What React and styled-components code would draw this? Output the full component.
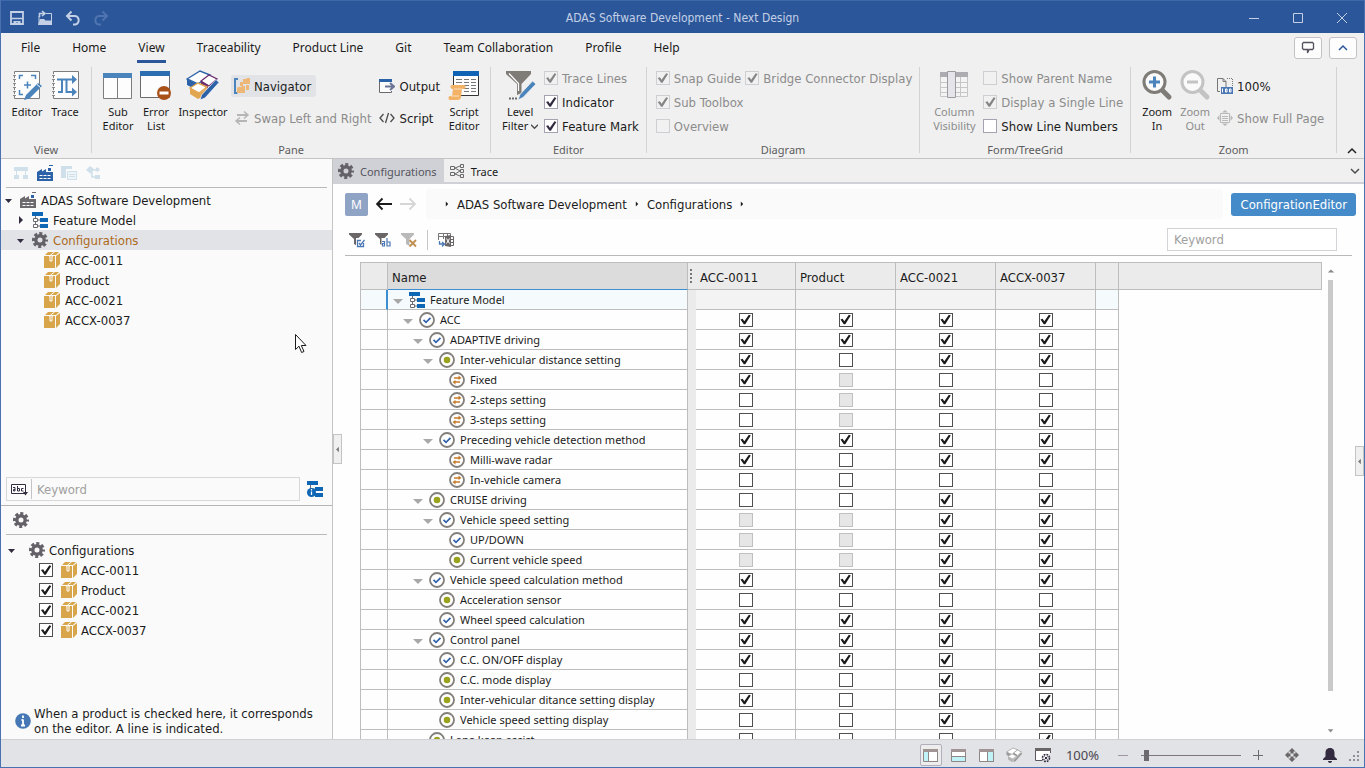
import React, { useState } from 'react';
import styled, { createGlobalStyle } from 'styled-components';

const UI_FONT = '"DejaVu Sans Condensed", "DejaVu Sans", sans-serif';
const LABEL_FONT = '"Noto Sans", "Open Sans", sans-serif';

const GlobalStyle = createGlobalStyle`
  * {
    box-sizing: border-box;
  }

  body {
    margin: 0;
    overflow: hidden;
    font-family: ${UI_FONT};
    font-size: 13px;
    color: #1b1b1b;
  }

  button, input {
    font: inherit;
    color: inherit;
    margin: 0;
    padding: 0;
  }

  button {
    background: none;
    border: none;
    cursor: pointer;
  }

  svg {
    display: block;
    flex: none;
  }
`;

const Window = styled.div`
  display: flex;
  flex-direction: column;
  height: 100vh;
  border: 1px solid #4a72b0;
  border-top: none;
  background: #fff;
`;

/* ---------- title bar ---------- */

const TitleBar = styled.header`
  display: grid;
  grid-template-columns: 1fr auto 1fr;
  align-items: center;
  height: 33px;
  flex: none;
  padding-top: 1px;
  background: #2b579a;
  color: #c3d0e6;
  border-top: 1px solid #3f68a8;
`;

const QuickAccess = styled.div`
  display: flex;
  gap: 12px;
  padding-left: 8px;
`;

const AppTitle = styled.h1`
  margin: 0;
  padding-top: 1px;
  font-size: 12px;
  font-weight: normal;
`;

const WindowButtons = styled.div`
  display: flex;
  justify-content: flex-end;
`;

const WindowButton = styled.button`
  display: grid;
  place-items: center;
  width: 44px;
  height: 31px;
`;

/* ---------- menu ---------- */

const MenuBar = styled.nav`
  display: flex;
  align-items: flex-start;
  height: 33px;
  flex: none;
  padding: 0 7px 0 4px;
  background: #f0f0f0;
`;

const MenuTab = styled.button`
  height: 30px;
  padding: 0 15px;
  font-family: ${LABEL_FONT};
  font-size: 12px;

  span {
    display: block;
    height: 30px;
    line-height: 30px;
    padding: 0 1px;
    border-bottom: 3px solid ${(props) => (props.$active ? '#2b579a' : 'transparent')};
  }
`;

const MenuTools = styled.div`
  display: flex;
  gap: 7px;
  margin: 4px 0 0 auto;
`;

const MenuTool = styled.button`
  display: grid;
  place-items: center;
  width: 28px;
  height: 22px;
  border: 1px solid #c3c3c6;
  border-radius: 3px;
  background: #fdfdfd;
`;

/* ---------- ribbon ---------- */

const Ribbon = styled.div`
  display: flex;
  height: 93px;
  flex: none;
  background: #f0f0f0;
  border-bottom: 1px solid #c4c4c4;
`;

const Group = styled.section`
  display: flex;
  flex-direction: column;
  padding: 0 8px 0 7px;
  position: relative;

  &::after {
    content: '';
    position: absolute;
    right: 0;
    top: 1px;
    bottom: 5px;
    width: 1px;
    background: #d3d3d6;
  }
`;

const GroupItems = styled.div`
  display: flex;
  height: 76px;
`;

const GroupLabel = styled.div`
  text-align: center;
  font-family: ${LABEL_FONT};
  font-size: 11px;
  line-height: 16px;
  color: #5c5c5c;
`;

const BigButton = styled.button`
  display: flex;
  flex-direction: column;
  align-items: center;
  gap: 4px;
  width: ${(props) => props.$width || 38}px;
  padding-top: 3px;
  font-family: ${LABEL_FONT};
  font-size: 11px;
  line-height: 14px;
  white-space: nowrap;
  color: ${(props) => (props.disabled ? '#8c8c8c' : '#1b1b1b')};
`;

const ButtonStack = styled.div`
  display: flex;
  flex-direction: column;
  align-items: flex-start;
  gap: 10px;
  padding-top: 9px;
`;

const SmallButton = styled.button`
  display: flex;
  align-items: center;
  gap: 4px;
  height: 22px;
  padding: 0 5px 0 3px;
  border-radius: 3px;
  white-space: nowrap;
  background: ${(props) => (props.$pressed ? '#e1e3e6' : 'transparent')};
  color: ${(props) => (props.disabled ? '#8c8c8c' : '#1b1b1b')};
`;

const CheckStack = styled.div`
  display: flex;
  flex-direction: column;
`;

const CheckLabel = styled.label`
  display: flex;
  align-items: center;
  gap: 4px;
  height: 24px;
  padding-left: 2px;
  white-space: nowrap;
  color: ${(props) => (props.$disabled ? '#8c8c8c' : '#1b1b1b')};
`;

const CheckBox = styled.input.attrs({ type: 'checkbox' })`
  appearance: none;
  display: block;
  flex: none;
  width: 14px;
  height: 14px;
  border: 1px solid ${(props) => (props.$soft ? '#a5a3b2' : '#4f4f4f')};
  background: #fff;

  &:checked::before {
    content: '';
    display: block;
    width: 12px;
    height: 12px;
    background: ${(props) => (props.$soft ? '#332b40' : '#1b1b1b')};
    clip-path: polygon(8% 50%, 26% 44%, 40% 64%, 78% 10%, 94% 16%, 48% 90%, 36% 90%);
  }

  &:disabled {
    border-color: ${(props) => (props.$soft ? '#cfcfd3' : '#c0c0c0')};
    background: ${(props) => (props.$soft ? '#f1f1f1' : '#e6e6e6')};
  }

  &:disabled::before {
    background: #858585;
  }
`;

const RibbonEnd = styled.div`
  display: flex;
  align-items: flex-end;
  margin-left: auto;
  padding: 0 7px 2px 0;
`;

/* ---------- side panel ---------- */

const Workspace = styled.main`
  display: grid;
  grid-template-columns: 332px 1fr;
  flex: 1;
  min-height: 0;
`;

const SidePanel = styled.aside`
  display: flex;
  flex-direction: column;
  min-height: 0;
  background: #fafafa;
  border-right: 1px solid #c4c4c4;
`;

const NavigatorPane = styled.section`
  display: flex;
  flex-direction: column;
  flex: 1;
  min-height: 0;
`;

const ProductPane = styled.section`
  display: flex;
  flex-direction: column;
  flex: 0 0 234px;
  border-top: 1px solid #b4b4b8;
`;

const PaneToolbar = styled.div`
  display: flex;
  align-items: center;
  gap: 8px;
  height: 29px;
  margin: 0 5px;
  padding: 0 7px;
  border-bottom: 1px solid #b9b9b9;
`;

const IconButton = styled.button`
  display: grid;
  place-items: center;
`;

const Tree = styled.ul`
  list-style: none;
  margin: 0;
  padding: ${(props) => props.$top}px 0 0;
  flex: 1;
`;

const TreeRow = styled.li`
  display: flex;
  align-items: center;
  gap: 5px;
  height: 20px;
  padding-left: ${(props) => 2 + props.$level * 12}px;
  background: ${(props) => (props.$selected ? '#e1e3e6' : 'transparent')};
  color: ${(props) => (props.$selected ? '#ad6a1c' : '#1b1b1b')};
`;

const CaretButton = styled.button`
  display: grid;
  place-items: center;
  width: 12px;
  height: 16px;
`;

const CheckTreeRow = styled.li`
  display: flex;
  align-items: center;
  gap: 4px;
  height: 20px;
  padding-left: ${(props) => (props.$root ? 5 : 38)}px;

  ${CaretButton} {
    margin-right: 7px;
  }

  label {
    display: flex;
    align-items: center;
    gap: 4px;
  }

  input {
    margin-right: 4px;
  }
`;

const SearchRow = styled.div`
  display: flex;
  align-items: center;
  justify-content: space-between;
  padding: 0 9px 4px 5px;
`;

const SearchBox = styled.div`
  display: flex;
  align-items: center;
  width: 294px;
  height: 24px;
  border: 1px solid #d8d8dc;

  button {
    padding: 0 3px 0 4px;
    height: 20px;
    border-right: 1px solid #c4c4c8;
  }

  input {
    flex: 1;
    min-width: 0;
    padding: 0 5px;
    border: none;
    outline: none;
    background: none;
  }

  input::placeholder {
    color: #a0a0a0;
  }
`;

const Hint = styled.p`
  display: flex;
  align-items: center;
  gap: 3px;
  margin: 0;
  padding: 0 14px 3px;
  line-height: 15px;
`;

/* ---------- editor ---------- */

const Editor = styled.section`
  display: flex;
  flex-direction: column;
  min-width: 0;
  min-height: 0;
  position: relative;
  background: #fefefe;
`;

const TabStrip = styled.div`
  display: flex;
  align-items: center;
  height: 25px;
  flex: none;
  padding-right: 4px;
  background: #f0f0f0;
  border-bottom: 2px solid #d0d1d7;
`;

const EditorTab = styled.button`
  display: flex;
  align-items: center;
  gap: 6px;
  height: 23px;
  padding: 1px 7px 0 5px;
  font-family: ${LABEL_FONT};
  font-size: 11px;
  background: ${(props) => (props.$active ? '#d0d1d7' : 'transparent')};
  color: ${(props) => (props.$active ? '#55555c' : '#1b1b1b')};
`;

const PathRow = styled.div`
  display: flex;
  align-items: center;
  gap: 8px;
  padding: 5px 8px 0 12px;
`;

const ModelButton = styled.button`
  width: 23px;
  height: 23px;
  border-radius: 2px;
  background: #8fa3c4;
  color: #fff;
  font-family: ${LABEL_FONT};
  font-size: 12px;
`;

const Breadcrumb = styled.nav`
  display: flex;
  align-items: center;
  gap: 7px;
  flex: 1;
  height: 30px;
  margin-left: 2px;
  padding-left: 18px;
  border-radius: 4px;
  background: #fafafa;

  a {
    color: inherit;
    text-decoration: none;
  }
`;

const EditorButton = styled.button`
  height: 23px;
  padding: 0 9px;
  border-radius: 3px;
  background: #468bc9;
  color: #fff;
`;

const GridToolbar = styled.div`
  display: flex;
  align-items: center;
  gap: 10px;
  height: 37px;
  flex: none;
  margin: 0 12px;
  padding: 5px 15px 0 4px;
  border-bottom: 1px solid #b9b9b9;
`;

const Separator = styled.span`
  width: 1px;
  height: 20px;
  background: #c4c4c4;
`;

const FilterInput = styled.input`
  width: 170px;
  height: 23px;
  margin-left: auto;
  padding: 0 6px;
  border: 1px solid #d3d3d8;
  background: #fff;

  &::placeholder {
    color: #a0a0a0;
  }
`;

const GridArea = styled.div`
  display: flex;
  flex: 1;
  min-height: 0;
  gap: 4px;
  padding: 6px 29px 0 27px;
`;

const GridViewport = styled.div`
  flex: 1;
  min-width: 0;
  overflow: hidden;
`;

const Grid = styled.table`
  width: 100%;
  table-layout: fixed;
  border-collapse: separate;
  border-spacing: 0;
`;

const HeadCell = styled.th`
  height: 28px;
  padding: 2px 4px 0;
  text-align: left;
  font-weight: normal;
  background: ${(props) => (props.$current ? '#dcdcdc' : '#ebebeb')};
  border: 1px solid #bdbdbd;
  border-left-width: ${(props) => (props.$first ? 1 : 0)}px;
  border-right-width: ${(props) => (props.$open ? 0 : 1)}px;
  border-bottom-color: ${(props) => (props.$current ? '#3c8ed0' : '#bdbdbd')};
`;

const Cell = styled.td`
  height: 20px;
  padding: 0;
  border-right: ${(props) => (props.$marked ? '2px solid #3c8ed0' : '1px solid #bdbdbd')};
  border-bottom: 1px solid #bdbdbd;
  border-left: ${(props) => (props.$first ? '1px solid #bdbdbd' : 'none')};
  background: ${(props) => props.$tint || '#fefefe'};

  input {
    margin: 0 auto;
  }
`;

const NameContent = styled.div`
  display: flex;
  align-items: center;
  gap: 5px;
  height: 19px;
  padding-left: ${(props) => 4 + props.$level * 10}px;
  font-family: ${LABEL_FONT};
  font-size: 11px;
  white-space: nowrap;
`;

const SplitterCell = styled.td`
  padding: 0;
  background: #ebebeb;
`;

const ScrollBar = styled.div`
  display: flex;
  flex-direction: column;
  align-items: center;
  width: 9px;
  padding: 5px 0;
`;

const ScrollThumb = styled.div`
  width: 5px;
  flex: 0 0 88%;
  margin: 5px 0 auto;
  background: #c9c9c9;
`;

const PanelHandle = styled.button`
  position: absolute;
  ${(props) => (props.$side === 'left' ? 'left: 0; top: 275px;' : 'right: 0; top: 287px;')}
  display: grid;
  place-items: center;
  width: 9px;
  height: 30px;
  border: 1px solid #c4c4c4;
  background: #f0f0f0;
`;

const MousePointer = styled.svg`
  position: fixed;
  left: 295px;
  top: 334px;
`;

/* ---------- status bar ---------- */

const StatusBar = styled.footer`
  display: flex;
  align-items: center;
  justify-content: flex-end;
  height: 28px;
  flex: none;
  padding: 3px 4px 0 0;
  background: #e1e3e6;
  border-top: 1px solid #cfd0d3;
`;

const StatusButton = styled.button`
  display: grid;
  place-items: center;
  width: 28px;
  height: 22px;
`;

const LayoutButton = styled(StatusButton)`
  width: 22px;
  margin-right: 3px;
  border: 1px solid ${(props) => (props.$active ? '#b3aebb' : 'transparent')};
  border-radius: 2px;
  background: ${(props) => (props.$active ? '#ededee' : 'transparent')};
`;

const NoticeButtons = styled.div`
  display: flex;
  gap: 10px;
  padding: 0 4px 0 6px;
`;

const ZoomValue = styled.output`
  padding: 0 10px 0 9px;
  font-family: ${LABEL_FONT};
  font-size: 13px;
  color: #4b4650;
`;

const ZoomSlider = styled.input.attrs({ type: 'range' })`
  appearance: none;
  width: 100px;
  height: 12px;
  margin: 0 3px 0 4px;
  background: linear-gradient(#7d757c, #7d757c) center / 100% 1px no-repeat;

  &::-webkit-slider-thumb {
    appearance: none;
    width: 5px;
    height: 11px;
    background: #6c6a6e;
  }
`;

/* ---------- icons ---------- */

const Icon = ({ size = 16, box = 16, children }) => (
  <svg width={size} height={size} viewBox={`0 0 ${box} ${box}`} fill="none" aria-hidden="true">
    {children}
  </svg>
);

const SaveIcon = () => (
  <Icon>
    <path d="M2 2h12v12H2z" stroke="#c3d0e6" strokeWidth="1.800" />
    <path d="M2 8.500h12" stroke="#c3d0e6" strokeWidth="1.500" />
    <path d="M4.500 11h7v4H9v-2.500H7V15H4.500z" fill="#c3d0e6" />
  </Icon>
);

const OpenIcon = () => (
  <Icon>
    <path d="M9 3.500h5.500v11M2 6v8.500" stroke="#c3d0e6" />
    <path d="M1 15l2-6h4l1.500 1.500H15V15z" fill="#c3d0e6" />
    <path d="M2.500 7V3.500H7M5 1l3 2.500L5 6" stroke="#c3d0e6" strokeWidth="1.600" />
  </Icon>
);

const UndoIcon = ({ flip }) => (
  <Icon>
    <g transform={flip ? 'translate(16 0) scale(-1 1)' : undefined} stroke={flip ? '#4f75b0' : '#c3d0e6'} strokeWidth="2">
      <path d="M6.500 1.500L2 6l4.500 4.500" />
      <path d="M2.500 6H10a4.300 4.300 0 0 1 0 8.500H8" />
    </g>
  </Icon>
);

const EditorIcon = () => (
  <Icon size={32} box={32}>
    <path d="M3.500 2.500h25v27h-25z" fill="#fdfdfd" stroke="#7d7d7d" />
    <path d="M3.500 5v24" stroke="#f0f0f0" strokeWidth="2" strokeDasharray="2 2" />
    <path d="M2 6.500h3M2 10.500h3M2 14.500h3M2 18.500h3M2 22.500h3M2 26.500h3" stroke="#8a8a8a" />
    <path d="M8.500 10V6.500H12M20 6.500h4.500V10M8.500 21v4.500H12M16.500 12.500v7M13 16h7" stroke="#4b84bb" strokeWidth="1.500" />
    <path d="M13 31l2-5L27 14l4 3-12.500 12.500z" fill="#4b84bb" />
    <path d="M26 15.500l3.500 3" stroke="#fff" />
  </Icon>
);

const TraceIcon = () => (
  <Icon size={32} box={32}>
    <path d="M4.500 2.500h25v27h-25z" fill="#fdfdfd" stroke="#7d7d7d" />
    <path d="M4.500 5v24" stroke="#f0f0f0" strokeWidth="2" strokeDasharray="2 2" />
    <path d="M3 6.500h3M3 10.500h3M3 14.500h3M3 18.500h3M3 22.500h3M3 26.500h3" stroke="#8a8a8a" />
    <path d="M8 10.500h5V23H9M13 10.500h12M17.500 10.500V23H26" stroke="#4b84bb" strokeWidth="2" />
    <path d="M23 6l5 4.500-5 4.500zM23 18.500l5 4.500-5 4.500z" fill="#4b84bb" />
  </Icon>
);

const SubEditorIcon = () => (
  <Icon size={32} box={32}>
    <path d="M1.500 4.500h28v25h-28zM15.500 9v20" fill="#fdfdfd" stroke="#7d7d7d" />
    <path d="M1 4h29v5H1z" fill="#4b84bb" />
  </Icon>
);

const ErrorListIcon = () => (
  <Icon size={32} box={32}>
    <path d="M.5 2.500h29v26H.5z" fill="#fdfdfd" stroke="#6c6a6e" />
    <path d="M0 2h30v5H0z" fill="#2c6cb0" />
    <circle cx="24" cy="24" r="7" fill="#a8521a" />
    <path d="M19.500 24h9" stroke="#fff" strokeWidth="3" />
  </Icon>
);

const InspectorArt = ({ gray }) => {
  const blue = gray ? '#9a9a9a' : '#2c62a8';
  const gold = gray ? '#b5b5b5' : '#e2a650';
  const plum = gray ? '#858585' : '#6b2d6f';
  return (
    <>
      <path d="M1 10L14 2l10 4-12 9z" fill="#fff" stroke={blue} strokeWidth="1.400" />
      <path d="M1 10v6l10 5v-6z" fill={blue} />
      <path d="M15 12l8-6 8 4-8 7z" fill="#fff" stroke={plum} strokeWidth="1.200" />
      <path d="M15 12v4l7 4v-4z" fill={plum} />
      <path d="M4 19l8-5 9 4-8 6z" fill="#fff" stroke={gold} strokeWidth="1.400" />
      <path d="M4 19v6l8 5 2-1v-5zM14 24l7-5v5l-7 5z" fill={gold} />
      <path d="M14 31l1.500-5L30 10.500l3 3L19 29z" fill={blue} stroke="#fff" strokeWidth=".7" />
    </>
  );
};

const InspectorIcon = () => (
  <svg width="34" height="32" viewBox="0 0 34 32" fill="none" aria-hidden="true">
    <InspectorArt />
  </svg>
);

const NavigatorIcon = () => (
  <Icon>
    <path d="M4 1H1v14h2.500" stroke="#4b84bb" strokeWidth="2" />
    <path d="M9 1h3l1-1h3v6H9zM6 4h3v3H6zM3 10l1-1h3l1-1h3v7H3z" fill="#edb877" />
    <path d="M10 7h5v5h-3V7zM6 5h3v3H6z" fill="#edb877" />
  </Icon>
);

const SwapIcon = () => (
  <Icon>
    <path d="M3 5h10M13 11H3" stroke="#b5b5b5" strokeWidth="2" />
    <path d="M10 1.500L14 5l-4 3.500M6 7.500L2 11l4 3.500" stroke="#b5b5b5" strokeWidth="1.500" />
  </Icon>
);

const OutputIcon = () => (
  <Icon>
    <path d="M12.500 4v-1.500H.5v12h12V13" fill="#fdfdfd" stroke="#6c6a6e" />
    <path d="M0 1h13v3H0z" fill="#2c62a8" />
    <path d="M6 8.500h8M11 5l4 3.500-4 3.500" stroke="#6b7595" strokeWidth="2" />
  </Icon>
);

const ScriptIcon = () => (
  <Icon>
    <path d="M4.500 4L1 8l3.500 4M11.500 4L15 8l-3.500 4M9.500 3l-3 10" stroke="#4c4c4c" strokeWidth="1.300" />
  </Icon>
);

const ScriptEditorIcon = () => (
  <Icon size={32} box={32}>
    <path d="M5.500 2.500h25v24h-25z" fill="#fdfdfd" stroke="#333" />
    <path d="M5 2h26v5H5z" fill="#1063b4" />
    <path d="M8 10.500h6M8 13.500h6M16 10.500h5M16 13.500h5M16 16.500h5M16 19.500h5M16 22.500h5M23 10.500h5M23 13.500h5M23 16.500h5M23 19.500h5M23 22.500h5" stroke="#777" />
    <path d="M4 16h12c2 0 2 4 0 4h-2l-1 8c0 2-2 3-3 3H2c-2 0-2-4 0-4h2l1-7H4c-2-1-2-4 0-4z" fill="#f3b266" />
    <path d="M6 20h8M3 27h8" stroke="#fbe0bd" />
  </Icon>
);

const LevelFilterIcon = () => (
  <Icon size={32} box={32}>
    <path d="M2 2h25v3L17.500 15v9L13 26V15L2 5z" fill="#7f7c78" />
    <path d="M5 4.500l9.500 10V22" stroke="#fff" strokeWidth="1.200" />
    <path d="M14 31l2-5.500L28.500 12l3.500 3-13 13.500z" fill="#4b84bb" stroke="#f0f0f0" strokeWidth=".8" />
    <path d="M5 29.500h9" stroke="#6c6a6e" strokeWidth="2" strokeDasharray="2 1" />
  </Icon>
);

const ColumnsIcon = () => (
  <Icon size={32} box={32}>
    <path d="M2.500 3.500h27v24h-27zM2 13.500h28M2 18.500h28M2 23.500h28M22.500 8v19" fill="#f4f4f4" stroke="#c6c6c6" />
    <path d="M2 3h28v5H2z" fill="#adadb1" />
    <path d="M9.500 2.500h8v26h-8z" fill="#e4e4ea" stroke="#9c9ca0" />
  </Icon>
);

const MagnifierIcon = ({ minus }) => (
  <Icon size={32} box={32}>
    <path d="M21 21l7 7" stroke={minus ? '#c3c3c3' : '#7f7c78'} strokeWidth="5" strokeLinecap="round" />
    <circle cx="13.500" cy="13" r="10.500" fill="#fafafa" stroke={minus ? '#c3c3c3' : '#7f7c78'} strokeWidth="3" />
    <path d={minus ? 'M8 13h11' : 'M8 13h11M13.500 7.500v11'} stroke={minus ? '#c3c3c3' : '#4b84bb'} strokeWidth="3" />
  </Icon>
);

const PageZoomIcon = () => (
  <Icon>
    <path d="M.5 13.500V.5H6l3 3V9M6 .5v3h3M3 13.500H.5" stroke="#777" />
    <path d="M10 .5h5.500V9" stroke="#777" strokeDasharray="1 1" />
    <path d="M4 9h12v7H4z" fill="#4b78b5" />
    <path d="M5.500 10.500v4M8.500 11h1.500v3H8.500zM12.500 11H14v3h-1.500z" stroke="#fff" />
  </Icon>
);

const FullPageIcon = () => (
  <Icon>
    <path d="M3.500 3.500h9v9h-9zM5 6.500h6M5 8.500h6M5 10.500h6" stroke="#b9b9b9" />
    <path d="M8 0l3 2.500H5zM8 16l3-2.500H5zM0 8l2.500-3v6zM16 8l-2.500-3v6z" fill="#b9b9b9" />
  </Icon>
);

const Chevron = ({ up, color = '#4c4c4c', size = 10 }) => (
  <Icon size={size} box={10}>
    <path d={up ? 'M1 7l4-4 4 4' : 'M1 3l4 4 4-4'} stroke={color} strokeWidth="1.500" />
  </Icon>
);

const TriangleIcon = ({ dir = 'down', color = '#332b40', size = 10 }) => {
  const shapes = {
    down: 'M1 4h7L4.500 8z',
    up: 'M1 7h8L5 3z',
    right: 'M3 1v8l4-4z',
    left: 'M7 1v8L3 5z',
  };
  return (
    <Icon size={size} box={10}>
      <path d={shapes[dir]} fill={color} />
    </Icon>
  );
};

const WideTriangle = () => (
  <svg width="10" height="8" viewBox="0 0 10 8" aria-hidden="true">
    <path d="M0 3h10L5 8z" fill="#a8a8a8" />
  </svg>
);

const OrgIcon = () => (
  <Icon>
    <path d="M1 2h14v4H1zM1 10h5v4H1zM10 10h5v4h-5z" fill="#cfe0ea" />
    <path d="M3.500 5v6M12.500 5v6" stroke="#cfe0ea" />
  </Icon>
);

const FactoryIcon = ({ color }) => (
  <Icon>
    <path d="M0 16V7l5-3v2.500l4-2.500v3h7v9z" fill={color} />
    <path d="M11 6V3h3v3z" fill="#2c62a8" />
    <path d="M12 .500h4" stroke={color} />
    <path d="M2.500 10.500h12M2.500 13.500h12" stroke="#fff" strokeWidth="1.200" strokeDasharray="3 1" />
  </Icon>
);

const PagesIcon = () => (
  <Icon>
    <path d="M0 1h11v3H5v9H0z" fill="#cfe0ea" />
    <path d="M6.500 6.500h9v8h-9zM8 9.500h6M8 11.500h6" fill="#eef4f7" stroke="#cfe0ea" />
  </Icon>
);

const PlugIcon = () => (
  <Icon>
    <path d="M1 5l4-4 4 3-3 5zM12 2l3 2.500L12.500 7 10 5zM10 10h5v4h-5z" fill="#cfe0ea" />
    <path d="M8 5h3M7 7v5h4" stroke="#cfe0ea" strokeWidth="1.500" />
  </Icon>
);

const FeatureModelIcon = ({ info }) => (
  <Icon>
    <path d="M0 0h11v4H0zM8 6h8v4H8zM8 12h8v4H8z" fill="#0f66b5" />
    <path d="M3.500 4v10M3 8h5M3 14h5" stroke="#6c6a6e" />
    {info ? (
      <>
        <circle cx="4.500" cy="11.500" r="4.500" fill="#0f66b5" />
        <path d="M4.500 8v1.500M4.500 10.500V14" stroke="#fff" strokeWidth="1.300" />
      </>
    ) : (
      <path d="M1.500 6.500h4v3h-4zM1.500 12.500h4v3h-4z" fill="#fff" stroke="#6c6a6e" />
    )}
  </Icon>
);

const GearIcon = () => (
  <Icon>
    <circle cx="8" cy="8" r="6.300" stroke="#656168" strokeWidth="3.400" strokeDasharray="2.900 2.048" strokeDashoffset="1.450" />
    <circle cx="8" cy="8" r="4.200" stroke="#656168" strokeWidth="3.400" />
  </Icon>
);

const PackageIcon = () => (
  <Icon>
    <path d="M0 4h11v12H0z" fill="#d8a54a" />
    <path d="M1 3l3-3h11l-3 3zM12 4l4-3v11l-4 4z" fill="#d8a54a" />
    <path d="M5 4h1v5h2V4h1" stroke="#fff" />
    <path d="M6.500 3l4-3" stroke="#fff" />
  </Icon>
);

const MandatoryIcon = () => (
  <Icon>
    <circle cx="8" cy="8" r="7" fill="#fff" stroke="#827e7a" strokeWidth="1.800" />
    <path d="M4.500 7.800l2.500 2.500 4.500-4.500" stroke="#2f62ab" strokeWidth="1.700" />
  </Icon>
);

const OptionalIcon = () => (
  <Icon>
    <circle cx="8" cy="8" r="7" fill="#fff" stroke="#827e7a" strokeWidth="1.800" />
    <circle cx="8" cy="8" r="3.300" fill="#9aa31d" />
  </Icon>
);

const AlternativeIcon = () => (
  <Icon>
    <circle cx="8" cy="8" r="7" fill="#fff" stroke="#827e7a" strokeWidth="1.800" />
    <path d="M5 6h6M11 10H5" stroke="#c77a2a" strokeWidth="1.300" />
    <path d="M9.500 3.500L12.500 6 9.500 8zM6.500 8l-3 2 3 2.500z" fill="#c77a2a" />
  </Icon>
);

const AbcIcon = () => (
  <svg width="17" height="14" viewBox="0 0 17 14" fill="none" aria-hidden="true">
    <path d="M.5 2.500h14v9H.5z" fill="#fff" stroke="#332b40" />
    <path d="M2 5.500h2v3.500H2.500V7.500H4M6.500 4v5h2V6.500H6.500M12.500 6.500h-2V9h2" stroke="#332b40" />
    <path d="M12 10h5l-2.500 3.500z" fill="#332b40" />
  </svg>
);

const InfoIcon = () => (
  <Icon>
    <circle cx="8" cy="8" r="7.800" fill="#4678b5" />
    <path d="M8 2.500v2.500M8 6.500v6M6 12.500h4M6.500 7H8" stroke="#fff" strokeWidth="1.800" />
  </Icon>
);

const TraceTabIcon = () => (
  <Icon>
    <path d="M1.500 3.500h4v3h-4zM1.500 9.500h4v3h-4zM11.500 1.500h3v3h-3zM11.500 6.500h3v3h-3zM11.500 11.500h3v3h-3zM6 5l5-2M6 5l5 3M6 11l5-3M6 11l5 2" stroke="#6a6a6a" />
  </Icon>
);

const ArrowIcon = ({ forward }) => (
  <Icon>
    <path
      d={forward ? 'M0 8h15M9.500 2.500L15 8l-5.500 5.500' : 'M16 8H1M6.500 2.500L1 8l5.500 5.500'}
      stroke={forward ? '#d6d6d6' : '#1b1b1b'}
      strokeWidth="1.900"
    />
  </Icon>
);

const FilterIcon = ({ kind }) => (
  <Icon>
    <path d="M0 1h13v1.500L8.500 7v7L5 12V7L0 2.500z" fill={kind === 'clear' ? '#b9b9b9' : '#6a6668'} />
    {kind === 'check' && (
      <>
        <path d="M7 6h9v9H7z" fill="#fff" />
        <path d="M14.500 11v3.500h-6v-6H12M10 11l1.500 2 4-5" stroke="#4b78b5" strokeWidth="1.300" />
      </>
    )}
    {kind === 'text' && (
      <>
        <path d="M6.500 6H16v9H6.500z" fill="#fff" />
        <path d="M7 9.500h2.500v4.500H7.500v-2.500h2M12 6v8h3v-4h-3" stroke="#4b78b5" strokeWidth="1.200" />
      </>
    )}
    {kind === 'clear' && <path d="M8.500 8l6.500 6.500M15 8l-6.500 6.500" stroke="#bf8f50" strokeWidth="1.800" />}
  </Icon>
);

const ExportIcon = () => (
  <Icon>
    <path d="M.5 8V1.500h12V5M.5 4.500h8M5.500 2v5M9.500 2v2" stroke="#777" />
    <path d="M7 4l6-1v12l-6-1z" fill="#6a6668" />
    <path d="M8.500 6.500l3 5M11.500 6.500l-3 5" stroke="#fff" />
    <path d="M13 4.500h2.500v9H13M13 7.500h3M13 10.500h3" stroke="#6a6668" />
    <path d="M1.500 9v3H6M4 10l2.500 2L4 14.500" stroke="#4b78b5" strokeWidth="1.300" />
  </Icon>
);

const LayoutIcon = ({ side }) => {
  const fills = { left: 'M1 5h4v9H1z', bottom: 'M1 10h14v4H1z', right: 'M9 5h6v9H9z' };
  const lines = { left: 'M5.500 5v9', bottom: 'M1 9.500h14', right: 'M8.500 5v9' };
  return (
    <Icon>
      <path d="M.5 2.500h14v12H.5z" fill="#fff" stroke="#8f8686" />
      <path d={fills[side]} fill="#bff3f8" />
      <path d="M0 2h15v3H0z" fill="#a19494" />
      <path d={lines[side]} stroke="#8f8686" />
      <path d="M14.500 5v10" stroke="#8f8686" />
    </Icon>
  );
};

const WindowGearIcon = () => (
  <Icon>
    <path d="M7 13.500H.5v-12h15V6" fill="#fff" stroke="#5c565e" />
    <path d="M0 1h16v3H0z" fill="#6a6668" />
    <circle cx="11" cy="11" r="3.500" stroke="#332b40" strokeWidth="1.600" strokeDasharray="1.750 1" />
    <path d="M9.500 9.500l3 3M12.500 9.500l-3 3" stroke="#332b40" />
  </Icon>
);

const MoveIcon = () => (
  <Icon>
    <path d="M8 1l3.500 3.500H9.500v2h-3v-2h-2zM8 15l3.500-3.500H9.500v-2h-3v2h-2zM1 8l3.500-3.500v2h2v3h-2v2zM15 8l-3.500-3.500v2h-2v3h2v2z" fill="#6a6668" />
  </Icon>
);

const BellIcon = () => (
  <Icon>
    <path d="M8 1c3.500 0 4.500 2.500 4.500 5v3.500L15 12v1H1v-1l2.500-2.500V6C3.500 3.500 4.500 1 8 1zM6 14h4c0 2.500-4 2.500-4 0z" fill="#332b40" />
  </Icon>
);

const GripIcon = () => (
  <Icon size={12} box={12}>
    <path d="M9 2h2v2H9zM5 6h2v2H5zM9 6h2v2H9zM1 10h2v2H1zM5 10h2v2H5zM9 10h2v2H9z" fill="#8f8f98" />
  </Icon>
);

/* ---------- data ---------- */

const MENU = ['File', 'Home', 'View', 'Traceability', 'Product Line', 'Git', 'Team Collaboration', 'Profile', 'Help'];

const PRODUCTS = ['ACC-0011', 'Product', 'ACC-0021', 'ACCX-0037'];

const FEATURE_ICONS = {
  model: FeatureModelIcon,
  mandatory: MandatoryIcon,
  optional: OptionalIcon,
  alternative: AlternativeIcon,
};

// checks: one letter per product, x = checked, o = unchecked, d = not selectable
const FEATURES = [
  { name: 'Feature Model', level: 0, type: 'model', open: true, checks: '' },
  { name: 'ACC', level: 1, type: 'mandatory', open: true, checks: 'xxxx' },
  { name: 'ADAPTIVE driving', level: 2, type: 'mandatory', open: true, checks: 'xxxx' },
  { name: 'Inter-vehicular distance setting', level: 3, type: 'optional', open: true, checks: 'xoxx' },
  { name: 'Fixed', level: 4, type: 'alternative', checks: 'xdoo' },
  { name: '2-steps setting', level: 4, type: 'alternative', checks: 'odxo' },
  { name: '3-steps setting', level: 4, type: 'alternative', checks: 'odox' },
  { name: 'Preceding vehicle detection method', level: 3, type: 'mandatory', open: true, checks: 'xxxx' },
  { name: 'Milli-wave radar', level: 4, type: 'alternative', checks: 'xoxx' },
  { name: 'In-vehicle camera', level: 4, type: 'alternative', checks: 'oooo' },
  { name: 'CRUISE driving', level: 2, type: 'optional', open: true, checks: 'ooxx' },
  { name: 'Vehicle speed setting', level: 3, type: 'mandatory', open: true, checks: 'ddxx' },
  { name: 'UP/DOWN', level: 4, type: 'mandatory', checks: 'ddxx' },
  { name: 'Current vehicle speed', level: 4, type: 'optional', checks: 'ddxx' },
  { name: 'Vehicle speed calculation method', level: 2, type: 'mandatory', open: true, checks: 'xxxx' },
  { name: 'Acceleration sensor', level: 3, type: 'optional', checks: 'oooo' },
  { name: 'Wheel speed calculation', level: 3, type: 'mandatory', checks: 'xxxx' },
  { name: 'Control panel', level: 2, type: 'mandatory', open: true, checks: 'xxxx' },
  { name: 'C.C. ON/OFF display', level: 3, type: 'mandatory', checks: 'xxxx' },
  { name: 'C.C. mode display', level: 3, type: 'optional', checks: 'ooxx' },
  { name: 'Inter-vehicular ditance setting display', level: 3, type: 'optional', checks: 'xoxx' },
  { name: 'Vehicle speed setting display', level: 3, type: 'optional', checks: 'ooxx' },
  { name: 'Lane keep assist', level: 2, type: 'optional', checks: 'ooox' },
];

/* ---------- parts ---------- */

const RibbonCheck = ({ label, checked, disabled }) => (
  <CheckLabel $disabled={disabled}>
    <CheckBox $soft defaultChecked={checked} disabled={disabled} />
    {label}
  </CheckLabel>
);

const InlineArrow = styled.svg`
  display: inline;
`;

const RibbonBar = () => (
  <Ribbon>
    <Group>
      <GroupItems>
        <BigButton><EditorIcon />Editor</BigButton>
        <BigButton><TraceIcon />Trace</BigButton>
      </GroupItems>
      <GroupLabel>View</GroupLabel>
    </Group>
    <Group>
      <GroupItems>
        <BigButton><SubEditorIcon /><span>Sub<br />Editor</span></BigButton>
        <BigButton><ErrorListIcon /><span>Error<br />List</span></BigButton>
        <BigButton $width={56}><InspectorIcon />Inspector</BigButton>
        <ButtonStack>
          <SmallButton $pressed><NavigatorIcon />Navigator</SmallButton>
          <SmallButton disabled><SwapIcon />Swap Left and Right</SmallButton>
        </ButtonStack>
        <ButtonStack>
          <SmallButton><OutputIcon />Output</SmallButton>
          <SmallButton><ScriptIcon />Script</SmallButton>
        </ButtonStack>
        <BigButton><ScriptEditorIcon /><span>Script<br />Editor</span></BigButton>
      </GroupItems>
      <GroupLabel>Pane</GroupLabel>
    </Group>
    <Group>
      <GroupItems>
        <BigButton $width={44}>
          <LevelFilterIcon />
          <span>
            Level<br />Filter{' '}
            <InlineArrow width="7" height="7" viewBox="0 0 8 8" fill="none" aria-hidden="true">
              <path d="M0 2l4 4 4-4" stroke="#4c4c4c" strokeWidth="1.500" />
            </InlineArrow>
          </span>
        </BigButton>
        <CheckStack>
          <RibbonCheck label="Trace Lines" checked disabled />
          <RibbonCheck label="Indicator" checked />
          <RibbonCheck label="Feature Mark" checked />
        </CheckStack>
      </GroupItems>
      <GroupLabel>Editor</GroupLabel>
    </Group>
    <Group>
      <GroupItems>
        <CheckStack>
          <RibbonCheck label="Snap Guide" checked disabled />
          <RibbonCheck label="Sub Toolbox" checked disabled />
          <RibbonCheck label="Overview" disabled />
        </CheckStack>
        <CheckStack>
          <RibbonCheck label="Bridge Connector Display" checked disabled />
        </CheckStack>
      </GroupItems>
      <GroupLabel>Diagram</GroupLabel>
    </Group>
    <Group>
      <GroupItems>
        <BigButton $width={54} disabled><ColumnsIcon /><span>Column<br />Visibility</span></BigButton>
        <CheckStack>
          <RibbonCheck label="Show Parent Name" disabled />
          <RibbonCheck label="Display a Single Line" checked disabled />
          <RibbonCheck label="Show Line Numbers" />
        </CheckStack>
      </GroupItems>
      <GroupLabel>Form/TreeGrid</GroupLabel>
    </Group>
    <Group>
      <GroupItems>
        <BigButton><MagnifierIcon /><span>Zoom<br />In</span></BigButton>
        <BigButton disabled><MagnifierIcon minus /><span>Zoom<br />Out</span></BigButton>
        <ButtonStack>
          <SmallButton><PageZoomIcon />100%</SmallButton>
          <SmallButton disabled><FullPageIcon />Show Full Page</SmallButton>
        </ButtonStack>
      </GroupItems>
      <GroupLabel>Zoom</GroupLabel>
    </Group>
    <RibbonEnd>
      <IconButton aria-label="Collapse"><Chevron up color="#222" /></IconButton>
    </RibbonEnd>
  </Ribbon>
);

const Navigator = () => (
  <NavigatorPane>
    <PaneToolbar>
      <IconButton aria-label="Structure"><OrgIcon /></IconButton>
      <IconButton aria-label="Project"><FactoryIcon color="#2c62a8" /></IconButton>
      <IconButton aria-label="Documents"><PagesIcon /></IconButton>
      <IconButton aria-label="Extensions"><PlugIcon /></IconButton>
    </PaneToolbar>
    <Tree $top={2}>
      <TreeRow $level={0}>
        <CaretButton aria-label="Toggle"><TriangleIcon /></CaretButton>
        <FactoryIcon color="#6c6a6e" />
        ADAS Software Development
      </TreeRow>
      <TreeRow $level={1}>
        <CaretButton aria-label="Toggle"><TriangleIcon dir="right" /></CaretButton>
        <FeatureModelIcon />
        Feature Model
      </TreeRow>
      <TreeRow $level={1} $selected>
        <CaretButton aria-label="Toggle"><TriangleIcon /></CaretButton>
        <GearIcon />
        Configurations
      </TreeRow>
      {PRODUCTS.map((product) => (
        <TreeRow key={product} $level={2}>
          <CaretButton as="span" />
          <PackageIcon />
          {product}
        </TreeRow>
      ))}
    </Tree>
    <SearchRow>
      <SearchBox>
        <button aria-label="Match mode"><AbcIcon /></button>
        <input type="text" placeholder="Keyword" aria-label="Keyword" />
      </SearchBox>
      <IconButton aria-label="Show information"><FeatureModelIcon info /></IconButton>
    </SearchRow>
  </NavigatorPane>
);

const Products = () => (
  <ProductPane>
    <PaneToolbar>
      <IconButton aria-label="Configurations"><GearIcon /></IconButton>
    </PaneToolbar>
    <Tree $top={5}>
      <CheckTreeRow $root>
        <CaretButton aria-label="Toggle"><TriangleIcon /></CaretButton>
        <GearIcon />
        Configurations
      </CheckTreeRow>
      {PRODUCTS.map((product) => (
        <CheckTreeRow key={product}>
          <label>
            <CheckBox defaultChecked />
            <PackageIcon />
            {product}
          </label>
        </CheckTreeRow>
      ))}
    </Tree>
    <Hint>
      <InfoIcon />
      <span>When a product is checked here, it corresponds on the editor. A line is indicated.</span>
    </Hint>
  </ProductPane>
);

const FeatureRow = ({ feature }) => {
  const FeatureIcon = FEATURE_ICONS[feature.type];
  const current = feature.type === 'model';
  return (
    <tr>
      <Cell $first $marked={current} $tint={current && '#f5fbfc'} />
      <Cell $tint={current && '#f5fbfc'}>
        <NameContent $level={feature.level}>
          <CaretButton as={feature.open ? 'button' : 'span'} aria-label={feature.open ? 'Toggle' : undefined}>
            {feature.open && <WideTriangle />}
          </CaretButton>
          <FeatureIcon />
          {feature.name}
        </NameContent>
      </Cell>
      <SplitterCell />
      {PRODUCTS.map((product, i) => (
        <Cell key={product} $tint={current && '#f3f3f3'}>
          {feature.checks[i] && (
            <CheckBox
              aria-label={`${feature.name} ${product}`}
              defaultChecked={feature.checks[i] === 'x'}
              disabled={feature.checks[i] === 'd'}
            />
          )}
        </Cell>
      ))}
      <Cell $tint={current && '#f5fbfc'} />
      <td />
    </tr>
  );
};

const Column = styled.col`
  width: ${(props) => (props.$width ? `${props.$width}px` : 'auto')};
`;

const SplitterHead = styled(HeadCell)`
  padding: 0;
`;

const FeatureGrid = () => (
  <Grid>
    <colgroup>
      <Column $width={28} />
      <Column $width={300} />
      <Column $width={8} />
      {PRODUCTS.map((product) => <Column key={product} $width={100} />)}
      <Column $width={23} />
      <Column />
    </colgroup>
    <thead>
      <tr>
        <HeadCell $first />
        <HeadCell $current>Name</HeadCell>
        <SplitterHead $open>
          <svg width="6" height="15" viewBox="0 0 6 15" aria-hidden="true">
            <path d="M2 0h2v2H2zM2 4h2v2H2zM2 8h2v2H2zM2 12h2v2H2z" fill="#777" />
          </svg>
        </SplitterHead>
        {PRODUCTS.map((product) => <HeadCell key={product}>{product}</HeadCell>)}
        <HeadCell />
        <HeadCell />
      </tr>
    </thead>
    <tbody>
      {FEATURES.map((feature) => <FeatureRow key={feature.name} feature={feature} />)}
    </tbody>
  </Grid>
);

const TabList = styled(IconButton)`
  margin-left: auto;
`;

const ConfigurationEditor = () => (
  <Editor>
    <TabStrip>
      <EditorTab $active><GearIcon />Configurations</EditorTab>
      <EditorTab><TraceTabIcon />Trace</EditorTab>
      <TabList aria-label="Tab list"><Chevron /></TabList>
    </TabStrip>
    <PathRow>
      <ModelButton>M</ModelButton>
      <IconButton aria-label="Back"><ArrowIcon /></IconButton>
      <IconButton aria-label="Forward"><ArrowIcon forward /></IconButton>
      <Breadcrumb>
        <TriangleIcon dir="right" size={6} color="#1b1b1b" />
        <a href="#project">ADAS Software Development</a>
        <TriangleIcon dir="right" size={6} color="#1b1b1b" />
        <a href="#configurations">Configurations</a>
        <TriangleIcon dir="right" size={6} color="#1b1b1b" />
      </Breadcrumb>
      <EditorButton>ConfigrationEditor</EditorButton>
    </PathRow>
    <GridToolbar>
      <IconButton aria-label="Filter by check"><FilterIcon kind="check" /></IconButton>
      <IconButton aria-label="Filter by text"><FilterIcon kind="text" /></IconButton>
      <IconButton aria-label="Clear filter"><FilterIcon kind="clear" /></IconButton>
      <Separator />
      <IconButton aria-label="Export"><ExportIcon /></IconButton>
      <FilterInput type="text" placeholder="Keyword" aria-label="Keyword" />
    </GridToolbar>
    <GridArea>
      <GridViewport>
        <FeatureGrid />
      </GridViewport>
      <ScrollBar>
        <TriangleIcon dir="up" color="#8a8a8a" size={8} />
        <ScrollThumb />
        <TriangleIcon color="#8a8a8a" size={8} />
      </ScrollBar>
    </GridArea>
    <PanelHandle $side="left" aria-label="Hide navigator"><TriangleIcon dir="left" color="#777" size={7} /></PanelHandle>
    <PanelHandle $side="right" aria-label="Show inspector"><TriangleIcon dir="left" color="#777" size={7} /></PanelHandle>
  </Editor>
);

const App = () => {
  const [activeTab, setActiveTab] = useState('View');

  return (
    <Window>
      <GlobalStyle />
      <TitleBar>
        <QuickAccess>
          <IconButton aria-label="Save"><SaveIcon /></IconButton>
          <IconButton aria-label="Open"><OpenIcon /></IconButton>
          <IconButton aria-label="Undo"><UndoIcon /></IconButton>
          <IconButton aria-label="Redo"><UndoIcon flip /></IconButton>
        </QuickAccess>
        <AppTitle>ADAS Software Development - Next Design</AppTitle>
        <WindowButtons>
          <WindowButton aria-label="Minimize"><Icon size={10} box={10}><path d="M0 5.500h10" stroke="#c3d0e6" /></Icon></WindowButton>
          <WindowButton aria-label="Maximize"><Icon size={10} box={10}><path d="M.5.5h9v9h-9z" stroke="#c3d0e6" /></Icon></WindowButton>
          <WindowButton aria-label="Close"><Icon size={10} box={10}><path d="M0 0l10 10M10 0L0 10" stroke="#c3d0e6" /></Icon></WindowButton>
        </WindowButtons>
      </TitleBar>
      <MenuBar>
        {MENU.map((item) => (
          <MenuTab key={item} $active={item === activeTab} onClick={() => setActiveTab(item)}>
            <span>{item}</span>
          </MenuTab>
        ))}
        <MenuTools>
          <MenuTool aria-label="Comments">
            <Icon size={14} box={14}><path d="M2.500 1.500h9l1 1v5l-1 1H8L6.500 12V8.500h-4l-1-1v-5z" stroke="#55505c" strokeWidth="1.300" /></Icon>
          </MenuTool>
          <MenuTool aria-label="Minimize ribbon"><Chevron up color="#2b579a" /></MenuTool>
        </MenuTools>
      </MenuBar>
      <RibbonBar />
      <Workspace>
        <SidePanel>
          <Navigator />
          <Products />
        </SidePanel>
        <ConfigurationEditor />
      </Workspace>
      <StatusBar>
        <LayoutButton $active aria-label="Left pane"><LayoutIcon side="left" /></LayoutButton>
        <StatusButton aria-label="Bottom pane"><LayoutIcon side="bottom" /></StatusButton>
        <StatusButton aria-label="Right pane"><LayoutIcon side="right" /></StatusButton>
        <StatusButton aria-label="Inspector">
          <svg width="17" height="16" viewBox="0 0 34 32" fill="none" aria-hidden="true"><InspectorArt gray /></svg>
        </StatusButton>
        <StatusButton aria-label="Window settings"><WindowGearIcon /></StatusButton>
        <ZoomValue>100%</ZoomValue>
        <StatusButton aria-label="Zoom out"><Icon size={10} box={10}><path d="M0 5.500h10" stroke="#9d98a2" /></Icon></StatusButton>
        <ZoomSlider aria-label="Zoom" defaultValue={3} />
        <StatusButton aria-label="Zoom in"><Icon size={10} box={10}><path d="M0 5.500h10M5.500 0v10" stroke="#6c6a6e" /></Icon></StatusButton>
        <NoticeButtons>
          <StatusButton aria-label="Fit"><MoveIcon /></StatusButton>
          <StatusButton aria-label="Notifications"><BellIcon /></StatusButton>
        </NoticeButtons>
        <GripIcon />
      </StatusBar>
      <MousePointer width="12" height="20" viewBox="0 0 12 20" aria-hidden="true">
        <path d="M.5.500v15l3.500-3.300 2.600 6.300 2.400-1-2.700-6H11z" fill="#fff" stroke="#1b1b1b" />
      </MousePointer>
    </Window>
  );
};

export default App;
